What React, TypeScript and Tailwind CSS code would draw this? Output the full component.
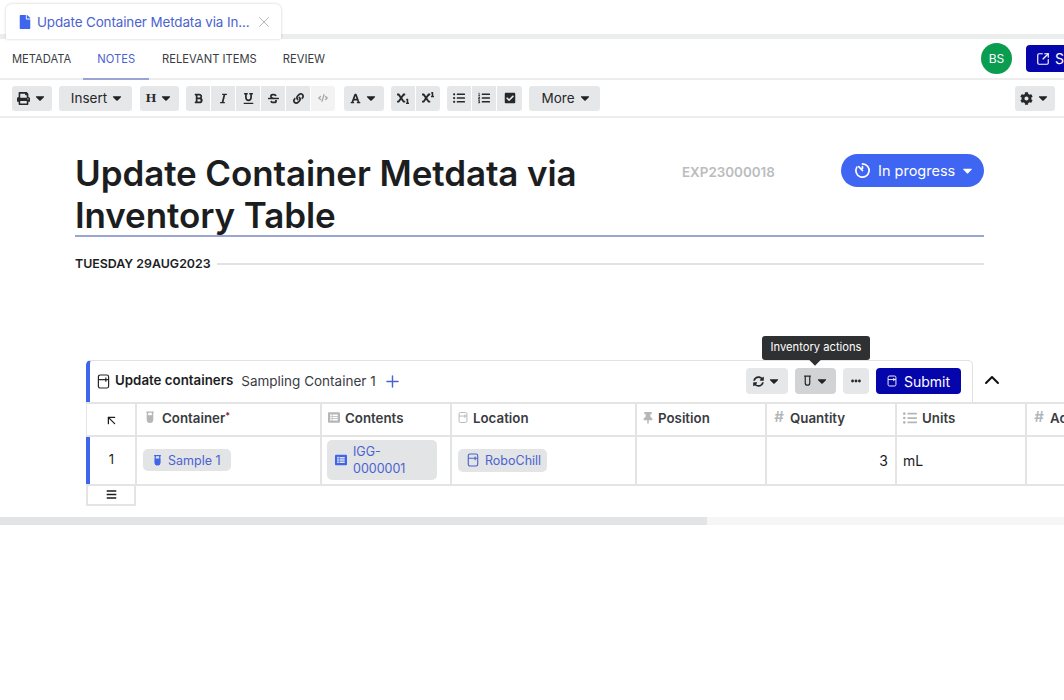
import type { ReactNode } from "react";
import { ArrowUpLeft, ChevronUp, Plus, SquareArrowOutUpRight, X } from "lucide-react";
import {
  FaBars,
  FaBold,
  FaCaretDown,
  FaCheckSquare,
  FaCode,
  FaCog,
  FaEllipsisH,
  FaFile,
  FaFont,
  FaItalic,
  FaLink,
  FaListAlt,
  FaListOl,
  FaListUl,
  FaPrint,
  FaStrikethrough,
  FaSubscript,
  FaSuperscript,
  FaSyncAlt,
  FaThumbtack,
  FaUnderline,
} from "react-icons/fa";

function Tube({ className = "", filled = true }: { className?: string; filled?: boolean }) {
  return (
    <svg viewBox="0 0 12 16" className={className} fill="none" stroke="currentColor" strokeWidth="1.6">
      <path d="M1.5 1.5h9M3 1.5v9a3 3 0 0 0 6 0v-9" />
      {filled && <path d="M3 6h6v4.5a3 3 0 0 1-6 0z" fill="currentColor" />}
    </svg>
  );
}

function Fridge({ className = "" }: { className?: string }) {
  return (
    <svg viewBox="0 0 14 16" className={className} fill="none" stroke="currentColor" strokeWidth="1.3">
      <rect x="1.5" y="1" width="11" height="14" rx="2" />
      <path d="M1.5 6h11M9.5 3.8v4.4" />
    </svg>
  );
}

function Timer({ className = "" }: { className?: string }) {
  return (
    <svg viewBox="0 0 18 18" className={className} fill="none" stroke="currentColor" strokeWidth="1.8" strokeLinecap="round">
      <path d="M9 2a7 7 0 1 1-6 3.4" />
      <path d="M9 5v1.5M5 5l4 4" />
    </svg>
  );
}

function ToolBtn({ className = "", children }: { className?: string; children: ReactNode }) {
  return <div className={`flex h-[25px] items-center justify-center bg-[#e6e7e9] text-[#26282b] ${className}`}>{children}</div>;
}

const Caret = () => <FaCaretDown size={14} className="ml-[3px] text-[#222]" />;

const FORMAT_BTNS = [
  { icon: <FaBold size={11} />, extra: "rounded-l-[3px]" },
  { icon: <FaItalic size={11} />, extra: "" },
  { icon: <FaUnderline size={11} />, extra: "" },
  { icon: <FaStrikethrough size={11} />, extra: "" },
  { icon: <FaLink size={11} />, extra: "" },
  { icon: <FaCode size={10} className="text-[#aaa]" />, extra: "rounded-r-[3px] !bg-[#f3f3f4]" },
];

function HeaderCell({ icon, iconWidth, label, required }: { icon: ReactNode; iconWidth: string; label: string; required?: boolean }) {
  return (
    <div className="flex items-center gap-[5px] border-l-2 border-[#e4e4e4] pl-[6px] text-[13.3px] font-semibold text-[#3a3c3f]">
      <span className={`mb-[3px] flex justify-center text-[#b4b6b8] ${iconWidth}`}>{icon}</span>
      <span className="whitespace-nowrap">
        {label}
        {required && <sup className="text-[9px] text-[#8b1a2b]">*</sup>}
      </span>
    </div>
  );
}

function Chip({ icon, children, className = "" }: { icon: ReactNode; children: ReactNode; className?: string }) {
  return (
    <div className={`flex items-center gap-[6px] rounded-[5px] bg-[#e3e4e6] text-[12.5px] leading-[17px] text-[#4a63d0] ${className}`}>
      {icon}
      <span>{children}</span>
    </div>
  );
}

export default function App() {
  return (
    <div className="h-[700px] w-[1064px] overflow-hidden bg-white font-['Inter','Liberation_Sans',sans-serif] text-[#1c1d1f]">
      {/* tab strip */}
      <div className="h-[39px] border-b-[5px] border-[#eceeee] pl-[6px] pt-[4px]">
        <div className="flex h-[35px] w-[275px] items-center rounded-t-[6px] bg-white pl-[12px] pt-[1px] shadow-[0_0_3px_rgba(0,0,0,0.2)]">
          <FaFile size={14} className="text-[#3f66ee]" />
          <span className="ml-[5px] whitespace-nowrap text-[13.4px] tracking-[-0.1px] text-[#4a63d0]">Update Container Metdata via In...</span>
          <X size={18} strokeWidth={1.3} className="ml-[5px] shrink-0 text-[#b5b5b5]" />
        </div>
      </div>

      {/* nav tabs */}
      <div className="flex h-[41px] items-center border-b-2 border-[#ededed] pl-[12px] text-[11.2px] text-[#3a3c3f]">
        <span className="pt-[2px]">METADATA</span>
        <span className="mb-[-2px] ml-[12px] flex items-center self-stretch border-b-2 border-[#9aa5d3] px-[14px] pt-[2px] text-[#4a63d0]">NOTES</span>
        <span className="ml-[13px] pt-[2px]">RELEVANT ITEMS</span>
        <span className="ml-[26px] pt-[2px]">REVIEW</span>
        <div className="ml-auto flex h-[31px] w-[31px] items-center justify-center rounded-full bg-[#0a9d50] text-[12px] text-white">BS</div>
        <div className="ml-[14px] flex h-[27px] w-[38px] items-center gap-[5px] rounded-l-[4px] bg-[#0505ac] pl-[10px] text-[14px] text-white">
          <SquareArrowOutUpRight size={14} />
          <span>S</span>
        </div>
      </div>

      {/* editor toolbar */}
      <div className="flex h-[38px] items-center border-b-2 border-[#ededed] pl-[12px] pr-[9px] text-[13.5px]">
        <ToolBtn className="w-[40px] rounded-[3px]"><FaPrint size={13} /><Caret /></ToolBtn>
        <ToolBtn className="ml-[7px] w-[73px] rounded-[3px] pl-[4px]">Insert<Caret /></ToolBtn>
        <ToolBtn className="ml-[8px] w-[39px] rounded-[3px] font-['Liberation_Serif',serif] font-bold">H<Caret /></ToolBtn>
        <div className="ml-[7px] flex gap-px">
          {FORMAT_BTNS.map((b, i) => (
            <ToolBtn key={i} className={`w-[24px] ${b.extra}`}>{b.icon}</ToolBtn>
          ))}
        </div>
        <ToolBtn className="ml-[9px] w-[40px] rounded-[3px]"><FaFont size={11} /><Caret /></ToolBtn>
        <div className="ml-[7px] flex gap-px">
          <ToolBtn className="w-[24px] rounded-l-[3px]"><FaSubscript size={12} /></ToolBtn>
          <ToolBtn className="w-[24px] rounded-r-[3px]"><FaSuperscript size={12} /></ToolBtn>
        </div>
        <div className="ml-[7px] flex gap-px">
          <ToolBtn className="w-[24px] rounded-l-[3px]"><FaListUl size={12} /></ToolBtn>
          <ToolBtn className="w-[24px]"><FaListOl size={12} /></ToolBtn>
          <ToolBtn className="w-[25px] rounded-r-[3px]"><FaCheckSquare size={12} /></ToolBtn>
        </div>
        <ToolBtn className="ml-[7px] w-[71px] rounded-[3px] pl-[4px]">More<Caret /></ToolBtn>
        <ToolBtn className="ml-auto w-[40px] rounded-[3px]"><FaCog size={13} /><Caret /></ToolBtn>
      </div>

      {/* title */}
      <div className="ml-[75px] w-[909px] pt-[34px]">
        <div className="flex h-[85px] border-b-2 border-[#9aa5d3]">
          <h1 className="w-[607px] text-[35px] font-semibold leading-[42px] tracking-[-0.1px] text-[#1c1d1f]">
            Update Container Metdata via Inventory Table
          </h1>
          <div className="mt-[10px] w-[159px] text-[13.4px] font-semibold text-[#bbbcbe]">EXP23000018</div>
          <div className="mt-[2px] flex h-[33px] w-[143px] items-center rounded-full bg-[#3f66f2] pl-[13px] text-[14.5px] text-white">
            <Timer className="h-[17px] w-[17px]" />
            <span className="ml-[7px]">In progress</span>
            <FaCaretDown size={15} className="ml-[5px]" />
          </div>
        </div>
        <div className="mt-[18px] flex items-center gap-[6px]">
          <span className="whitespace-nowrap text-[12.4px] font-semibold text-[#1c1d1f]">TUESDAY 29AUG2023</span>
          <div className="h-[2px] flex-1 bg-[#e2e2e2]" />
        </div>
      </div>

      {/* inventory block */}
      <div className="relative ml-[86px] mt-[86px]">
        <div className="absolute left-[676px] top-[-24px] z-10 flex h-[24px] w-[108px] items-center justify-center rounded-[3px] bg-[#2f3032] text-[11.2px] text-white">
          Inventory actions
          <div className="absolute bottom-[-4px] left-[49px] h-[8px] w-[8px] rotate-45 bg-[#2f3032]" />
        </div>

        <div className="flex items-center">
          <div className="flex h-[42px] w-[887px] items-center rounded-tl-[5px] rounded-tr-[5px] border border-b-0 border-l-[4px] border-[#e2e2e2] border-l-[#3f66e8] pl-[7px] pr-[11px]">
            <Fridge className="h-[15px] w-[13px] text-[#26282b]" />
            <span className="ml-[5px] text-[13.3px] font-semibold">Update containers</span>
            <span className="ml-[8px] text-[13.5px] text-[#3a3c3f]">Sampling Container 1</span>
            <Plus size={19} strokeWidth={1.8} className="ml-[7px] text-[#4a63d0]" />
            <div className="ml-auto flex items-center gap-[7px]">
              <ToolBtn className="h-[26px] w-[42px] rounded-[4px]"><FaSyncAlt size={11} /><Caret /></ToolBtn>
              <ToolBtn className="h-[26px] w-[41px] rounded-[4px] !bg-[#d2d3d5]">
                <Tube filled={false} className="h-[12px] w-[9px]" />
                <Caret />
              </ToolBtn>
              <ToolBtn className="h-[26px] w-[26px] rounded-[4px]"><FaEllipsisH size={10} /></ToolBtn>
              <div className="flex h-[26px] w-[85px] items-center justify-center gap-[7px] rounded-[4px] bg-[#0505ac] text-[14px] text-white">
                <Fridge className="h-[12px] w-[10px]" />
                Submit
              </div>
            </div>
          </div>
          <ChevronUp size={24} strokeWidth={2} className="mb-[2px] ml-[7px] text-[#111]" />
        </div>

        <div className="grid w-[1100px] grid-cols-[49px_185px_130px_185px_130px_130px_130px_160px] border-y-2 border-[#e4e4e4]">
          <div className="flex h-[31px] items-center justify-center border-l border-[#e4e4e4]">
            <ArrowUpLeft size={15} strokeWidth={2} className="mt-[3px]" />
          </div>
          <HeaderCell iconWidth="w-[14px]" icon={<Tube className="h-[15px] w-[10px]" />} label="Container" required />
          <HeaderCell iconWidth="w-[12px]" icon={<FaListAlt size={13} />} label="Contents" />
          <HeaderCell iconWidth="w-[10px]" icon={<Fridge className="h-[15px] w-[11px]" />} label="Location" />
          <HeaderCell iconWidth="w-[10px]" icon={<FaThumbtack size={12} />} label="Position" />
          <HeaderCell iconWidth="w-[12px]" icon={<span className="text-[15px]">#</span>} label="Quantity" />
          <HeaderCell iconWidth="w-[14px]" icon={<FaListUl size={14} />} label="Units" />
          <HeaderCell iconWidth="w-[12px]" icon={<span className="text-[15px]">#</span>} label="Actual" />
        </div>

        <div className="grid w-[1100px] grid-cols-[49px_185px_130px_185px_130px_130px_130px_160px] border-b-2 border-[#e4e4e4] text-[14px]">
          <div className="flex h-[47px] items-center justify-center border-l-[4px] border-[#3f66e8] pr-[2px] text-[13px]">1</div>
          <div className="flex items-center border-l-2 border-[#e4e4e4] pl-[6px]">
            <Chip icon={<Tube className="h-[13px] w-[9px] text-[#3f66e8]" />} className="h-[22px] w-[88px] pl-[10px]">Sample 1</Chip>
          </div>
          <div className="flex items-center border-l-2 border-[#e4e4e4] pl-[5px]">
            <Chip icon={<FaListAlt size={12} className="text-[#3f66e8]" />} className="h-[40px] w-[110px] pl-[8px]">IGG-<br />0000001</Chip>
          </div>
          <div className="flex items-center border-l-2 border-[#e4e4e4] pl-[6px]">
            <Chip icon={<Fridge className="h-[14px] w-[12px] text-[#4a63d0]" />} className="h-[23px] w-[89px] pl-[9px]">RoboChill</Chip>
          </div>
          <div className="border-l-2 border-[#e4e4e4]" />
          <div className="flex items-center justify-end border-l-2 border-[#e4e4e4] pr-[7px]">3</div>
          <div className="flex items-center border-l-2 border-[#e4e4e4] pl-[6px]">mL</div>
          <div className="border-l-2 border-[#e4e4e4]" />
        </div>

        <div className="flex h-[20px] w-[50px] items-center justify-center border-x-2 border-b-2 border-[#e4e4e4]">
          <FaBars size={11} />
        </div>
      </div>

      {/* horizontal scrollbar */}
      <div className="mt-[11px] h-[8px] w-full bg-[#f6f6f6]">
        <div className="h-full w-[707px] bg-[#e3e4e5]" />
      </div>
    </div>
  );
}
